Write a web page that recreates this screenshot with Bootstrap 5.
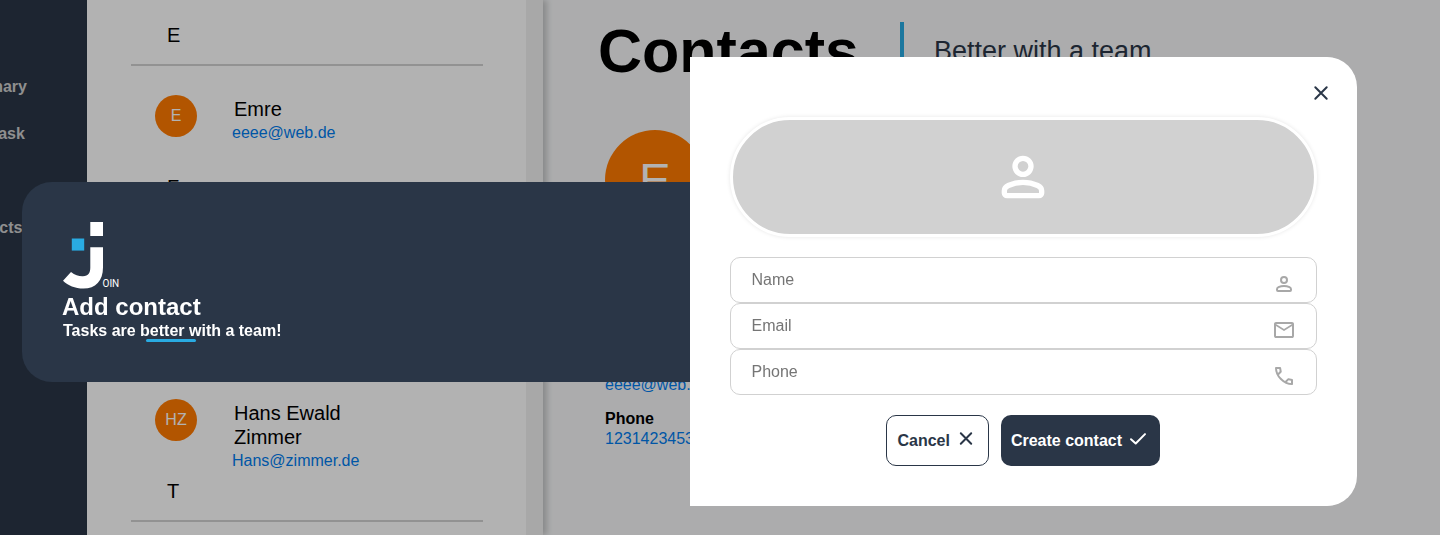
<!DOCTYPE html>
<html lang="en">
<head>
<meta charset="utf-8">
<meta name="viewport" content="width=device-width, initial-scale=1">
<title>Join - Contacts</title>
<link href="https://cdn.jsdelivr.net/npm/bootstrap@5.3.0/dist/css/bootstrap.min.css" rel="stylesheet">
<style>
  :root { --navy: #2a3647; --sky: #29abe2; --orange: #ff7a00; --line: #d1d1d1; --mail: #007cee; }
  body { font-family: "Liberation Sans", Arial, sans-serif; font-size: 16px; line-height: 20px; color: #000; background: #f6f7f8; }
  a { color: var(--mail); text-decoration: none; }

  /* page behind the dialog */
  .side-menu { width: 233px; margin-left: -146px; padding: 77px 0 0 100px; background: var(--navy); gap: 27px; }
  .side-menu a { color: #cdcdcd; font-weight: 700; }
  .people { width: 456px; border-right: 17px solid #f1f1f1; box-shadow: 4px 0 6px rgba(0, 0, 0, .2); background: #fff; z-index: 1; }
  .people section { padding: 23px 43px 0 44px; }
  .initial { font-size: 20px; line-height: 24px; padding-left: 36px; margin-bottom: 17px; border: 0; }
  .people hr { height: 2px; margin: 0 0 29px; border: 0; background: var(--line); opacity: 1; }
  .person { height: 57px; padding-left: 24px; gap: 35px; }
  .disc { border-radius: 50%; background: var(--orange); color: #fff; }
  .disc-sm { width: 42px; height: 42px; }
  .disc-lg { width: 100px; height: 100px; font-size: 47px; }
  .person-text { padding-top: 2px; width: 150px; }
  .person-name { font-size: 20px; line-height: 24px; padding-left: 2px; }
  .person-text a { display: block; line-height: 24px; }
  .details { padding: 22px 0 0 55px; }
  .page-title { font-size: 61px; line-height: 59px; font-weight: 700; }
  .page-head { gap: 41px; height: 59px; margin-bottom: 49px; }
  .page-bar { width: 4px; background: var(--sky); }
  .page-claim { font-size: 27px; line-height: 59px; color: var(--navy); margin-left: -11px; }
  .details-list { padding-left: 7px; }
  .details-mail { margin: 145px 0 14px; }

  /* dialog */
  .veil { background: rgba(0, 0, 0, .3); padding: 28px 83px 0 22px; z-index: 10; }
  .intro { height: 200px; padding: 40px; background: var(--navy); color: #fff; border-radius: 30px 0 0 30px; }
  .intro h2 { font-size: 24px; line-height: 30px; font-weight: 700; }
  .intro p { line-height: 17px; font-weight: 700; padding-left: 1px; }
  .intro-rule { width: 50px; height: 3px; margin: 0 0 0 84px; border-radius: 2px; background: var(--sky); }
  .sheet { padding: 24px 40px 40px; background: #fff; border-radius: 0 30px 30px 0; }
  .close-x { color: var(--navy); margin: 0 -16px 12px 0; line-height: 0; }
  .portrait { height: 120px; margin-bottom: 20px; border: 3px solid #fff; border-radius: 60px; background: var(--line); box-shadow: 0 0 4px rgba(0, 0, 0, .1); color: #fff; }
  .field { height: 46px; padding: 0 20px 0 21px; border: 1px solid var(--line); border-radius: 10px; color: #a8a8a8; }
  .field:focus-within { border-color: var(--sky); }
  .field input { color: #000; outline: 0; min-width: 0; }
  .field input::placeholder { color: #757575; opacity: 1; }
  .field svg { margin-bottom: 6px; }
  .actions { margin-top: 20px; gap: 12px; }
  .act { height: 51px; gap: 4px; padding: 0 10px; border-radius: 10px; font-size: 16px; font-weight: 700; }
  .act-line { border: 1px solid var(--navy); color: var(--navy); background: #fff; }
  .act-fill { border: 0; color: #fff; background: var(--navy); }
</style>
</head>
<body>
<svg class="d-none" aria-hidden="true">
  <symbol id="i-person" viewBox="0 0 24 24"><g fill="none" stroke="currentColor" stroke-width="2"><circle cx="12" cy="8" r="3"/><path stroke-linejoin="round" d="M5 17.2c0-1 .6-1.6 1.5-2C8.2 14.4 10 14 12 14s3.8.4 5.5 1.2c.9.4 1.5 1 1.5 2V18a1 1 0 0 1-1 1H6a1 1 0 0 1-1-1z"/></g></symbol>
  <symbol id="i-mail" viewBox="0 0 24 24"><path d="M4 20q-.825 0-1.412-.587Q2 18.825 2 18V6q0-.825.588-1.412Q3.175 4 4 4h16q.825 0 1.413.588Q22 5.175 22 6v12q0 .825-.587 1.413Q20.825 20 20 20zm8-7L4 8v10h16V8zm0-2 8-5H4zM4 8V6v12z" fill="currentColor"/></symbol>
  <symbol id="i-call" viewBox="0 0 24 24"><path fill="currentColor" d="M19.95 21q-3.125 0-6.175-1.362-3.05-1.363-5.55-3.863-2.5-2.5-3.862-5.55Q3 7.175 3 4.05 3 3.6 3.3 3.3T4.05 3H8.1q.35 0 .625.238.275.237.325.562l.65 3.5q.05.4-.025.675-.075.275-.275.475L6.975 10.9q.5.925 1.188 1.788.687.862 1.512 1.662.775.775 1.625 1.438.85.662 1.8 1.212l2.35-2.35q.225-.225.588-.337.362-.113.712-.063l3.45.7q.35.1.575.363Q21 15.575 21 15.9v4.05q0 .45-.3.75t-.75.3zM6.025 9l1.65-1.65L7.25 5H5.025q.125 1.025.35 2.025.225 1 .65 1.975zm8.95 8.95q.975.425 1.988.675 1.012.25 2.037.325v-2.2l-2.35-.475z"/></symbol>
  <symbol id="i-close" viewBox="0 0 24 24"><path fill="none" stroke="currentColor" stroke-width="2" stroke-linecap="round" d="M6.300 6.300 17.700 17.700M17.700 6.300 6.300 17.700"/></symbol>
  <symbol id="i-cancel" viewBox="0 0 24 24"><path fill="none" stroke="currentColor" stroke-width="2" stroke-linecap="round" d="M6.800 6.300 17.200 16.700M17.200 6.300 6.800 16.700"/></symbol>
  <symbol id="i-check" viewBox="0 0 24 24"><path fill="none" stroke="currentColor" stroke-width="2" stroke-linecap="round" stroke-linejoin="round" d="M5 12.200 9.700 16.500 19 7.100"/></symbol>
</svg>

<div class="d-flex vh-100 overflow-hidden">
  <nav class="side-menu d-flex flex-column flex-shrink-0" aria-label="Main">
    <a href="#">Summary</a>
    <a href="#">Add Task</a>
    <a href="#">Board</a>
    <a href="#">Contacts</a>
  </nav>

  <div class="people flex-shrink-0 position-relative">
    <section>
      <div class="initial">E</div><hr>
      <div class="person d-flex">
        <div class="disc disc-sm d-flex align-items-center justify-content-center flex-shrink-0">E</div>
        <div class="person-text"><div class="person-name">Emre</div><a href="#">eeee@web.de</a></div>
      </div>
    </section>
    <section>
      <div class="initial">F</div><hr>
      <div class="person d-flex"></div>
    </section>
    <section>
      <div class="initial">H</div><hr>
      <div class="person d-flex">
        <div class="disc disc-sm d-flex align-items-center justify-content-center flex-shrink-0">HZ</div>
        <div class="person-text"><div class="person-name">Hans Ewald Zimmer</div><a href="#">Hans@zimmer.de</a></div>
      </div>
    </section>
    <section>
      <div class="initial">T</div><hr>
    </section>
  </div>

  <main class="details flex-grow-1">
    <header class="page-head d-flex">
      <h1 class="page-title m-0">Contacts</h1>
      <div class="page-bar"></div>
      <div class="page-claim">Better with a team</div>
    </header>
    <div class="details-list">
      <div class="disc disc-lg d-flex align-items-center justify-content-center">E</div>
      <div class="details-mail"><a href="#">eeee@web.de</a></div>
      <div class="fw-bold">Phone</div>
      <a href="#">1231423453</a>
    </div>
  </main>
</div>

<div class="veil position-fixed top-0 start-0 w-100 h-100 d-flex align-items-center" role="dialog" aria-modal="true" aria-labelledby="dialog-title">
  <div class="intro w-50">
    <svg class="d-block" width="60" height="70" viewBox="0 0 60 70" role="img" aria-label="Join">
      <path fill="#fff" d="M28.300 0H41v14H28.300zM28.300 25.200H41V45.500C41 59 33.500 66.600 21.500 66.600 13 66.600 6 63.400 1 58.800L9 50C13 53.500 17.500 54.500 21 54.300 26.500 54 28.300 50.500 28.300 45.500z"/>
      <path fill="#29abe2" d="M9.800 16.500H22.200V28.600H9.800z"/>
      <text x="40.500" y="64.500" fill="#fff" font-family="Roboto, sans-serif" font-size="10">OIN</text>
    </svg>
    <h2 class="m-0" id="dialog-title">Add contact</h2>
    <p class="m-0">Tasks are better with a team!</p>
    <div class="intro-rule"></div>
  </div>

  <form class="sheet w-50">
    <div class="d-flex justify-content-end">
      <button type="button" class="close-x border-0 bg-transparent p-0" aria-label="Close"><svg width="24" height="24"><use href="#i-close"/></svg></button>
    </div>
    <div class="portrait d-flex align-items-center justify-content-center"><svg width="64" height="64" aria-hidden="true"><use href="#i-person"/></svg></div>
    <div class="field d-flex">
      <input class="flex-grow-1 border-0 bg-transparent p-0" type="text" placeholder="Name" aria-label="Name">
      <svg class="align-self-end flex-shrink-0" width="24" height="24" aria-hidden="true"><use href="#i-person"/></svg>
    </div>
    <div class="field d-flex">
      <input class="flex-grow-1 border-0 bg-transparent p-0" type="email" placeholder="Email" aria-label="Email">
      <svg class="align-self-end flex-shrink-0" width="24" height="24" aria-hidden="true"><use href="#i-mail"/></svg>
    </div>
    <div class="field d-flex">
      <input class="flex-grow-1 border-0 bg-transparent p-0" type="tel" placeholder="Phone" aria-label="Phone">
      <svg class="align-self-end flex-shrink-0" width="24" height="24" aria-hidden="true"><use href="#i-call"/></svg>
    </div>
    <div class="actions d-flex justify-content-center">
      <button type="button" class="act act-line d-flex align-items-center">Cancel <svg class="mb-1" width="24" height="24" aria-hidden="true"><use href="#i-cancel"/></svg></button>
      <button type="submit" class="act act-fill d-flex align-items-center">Create contact <svg class="mb-1" width="24" height="24" aria-hidden="true"><use href="#i-check"/></svg></button>
    </div>
  </form>
</div>
<script src="https://cdn.jsdelivr.net/npm/bootstrap@5.3.0/dist/js/bootstrap.bundle.min.js"></script>
</body>
</html>
